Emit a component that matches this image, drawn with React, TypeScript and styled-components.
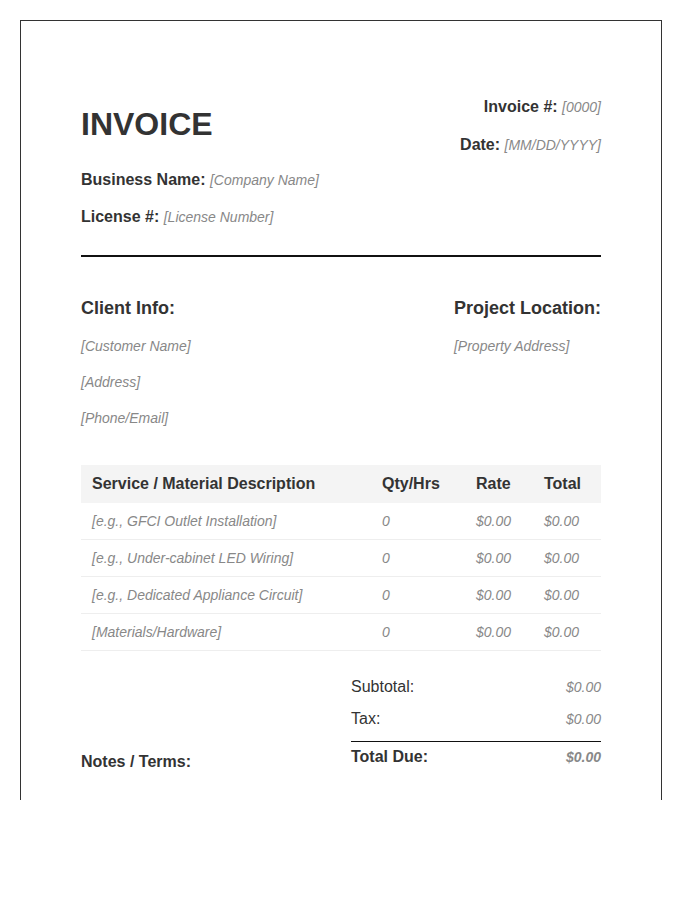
import styled, { createGlobalStyle } from 'styled-components'

const Global = createGlobalStyle`
  body {
    margin: 0;
    background: #fff;
    font-family: 'Liberation Sans', Arial, sans-serif;
    color: #333;
  }
`

const Page = styled.div`
  margin: 20px 0 0 20px;
  width: 642px;
  height: 780px;
  box-sizing: border-box;
  border: 1px solid #333;
  border-bottom: none;
  padding: 76px 60px 0;
  overflow: hidden;
`

const Header = styled.div`
  display: flex;
  justify-content: space-between;
`

const Title = styled.h1`
  margin: 8px 0 0;
  font-size: 32px;
  line-height: 38px;
  font-weight: bold;
`

const Line = styled.p<{ $gap?: number }>`
  margin: ${(p) => p.$gap ?? 0}px 0 0;
  font-size: 16px;
  line-height: 20px;
  font-weight: bold;
`

const RightCol = styled.div`
  text-align: right;
`

const Ph = styled.span`
  font-size: 14px;
  font-weight: normal;
  font-style: italic;
  color: #888;
`

const Rule = styled.hr`
  margin: 28px 0 0;
  border: none;
  border-top: 2px solid #111;
`

const InfoRow = styled.div`
  display: flex;
  justify-content: space-between;
  margin-top: 39px;
`

const Heading = styled.h2`
  margin: 0 0 10px;
  font-size: 18px;
  line-height: 24px;
  font-weight: bold;
`

const InfoItem = styled.div`
  margin-top: 16px;
  font-size: 14px;
  line-height: 20px;
  font-style: italic;
  color: #888;
`

const Table = styled.table`
  margin-top: 37px;
  width: 520px;
  border-collapse: collapse;
  table-layout: fixed;
`

const Th = styled.th<{ $w: number }>`
  width: ${(p) => p.$w}px;
  height: 38px;
  padding: 0 11px;
  background: #f4f4f4;
  text-align: left;
  font-size: 16px;
  font-weight: bold;
`

const Td = styled.td`
  height: 36px;
  padding: 0 11px;
  border-bottom: 1px solid #eee;
  font-size: 14px;
  font-style: italic;
  color: #888;
  white-space: nowrap;
`

const Bottom = styled.div`
  display: flex;
  justify-content: space-between;
  align-items: flex-end;
  margin-top: 26px;
`

const Notes = styled.div`
  font-size: 16px;
  font-weight: bold;
  line-height: 20px;
  margin-bottom: -5px;
`

const Totals = styled.div`
  width: 250px;
`

const TotalRow = styled.div<{ $bold?: boolean; $gap?: number }>`
  display: flex;
  justify-content: space-between;
  margin-top: ${(p) => p.$gap ?? 0}px;
  font-size: 16px;
  line-height: 20px;
  font-weight: ${(p) => (p.$bold ? 'bold' : 'normal')};
`

const Amount = styled.span<{ $bold?: boolean }>`
  font-size: 14px;
  font-style: italic;
  color: #888;
  font-weight: ${(p) => (p.$bold ? 'bold' : 'normal')};
`

const TotalRule = styled.div`
  margin-top: 12px;
  border-top: 1px solid #111;
  padding-top: 5px;
`

const rows = [
  '[e.g., GFCI Outlet Installation]',
  '[e.g., Under-cabinet LED Wiring]',
  '[e.g., Dedicated Appliance Circuit]',
  '[Materials/Hardware]',
]

export default function App() {
  return (
    <>
      <Global />
      <Page>
        <Header>
          <div>
            <Title>INVOICE</Title>
            <Line $gap={27}>
              Business Name: <Ph>[Company Name]</Ph>
            </Line>
            <Line $gap={17}>
              License #: <Ph>[License Number]</Ph>
            </Line>
          </div>
          <RightCol>
            <Line>
              Invoice #: <Ph>[0000]</Ph>
            </Line>
            <Line $gap={18}>
              Date: <Ph>[MM/DD/YYYY]</Ph>
            </Line>
          </RightCol>
        </Header>
        <Rule />
        <InfoRow>
          <div>
            <Heading>Client Info:</Heading>
            <InfoItem>[Customer Name]</InfoItem>
            <InfoItem>[Address]</InfoItem>
            <InfoItem>[Phone/Email]</InfoItem>
          </div>
          <div>
            <Heading>Project Location:</Heading>
            <InfoItem>[Property Address]</InfoItem>
          </div>
        </InfoRow>
        <Table>
          <thead>
            <tr>
              <Th $w={268}>Service / Material Description</Th>
              <Th $w={72}>Qty/Hrs</Th>
              <Th $w={46}>Rate</Th>
              <Th $w={46}>Total</Th>
            </tr>
          </thead>
          <tbody>
            {rows.map((r) => (
              <tr key={r}>
                <Td>{r}</Td>
                <Td>0</Td>
                <Td>$0.00</Td>
                <Td>$0.00</Td>
              </tr>
            ))}
          </tbody>
        </Table>
        <Bottom>
          <Notes>Notes / Terms:</Notes>
          <Totals>
            <TotalRow>
              Subtotal: <Amount>$0.00</Amount>
            </TotalRow>
            <TotalRow $gap={12}>
              Tax: <Amount>$0.00</Amount>
            </TotalRow>
            <TotalRule>
              <TotalRow $bold>
                Total Due: <Amount $bold>$0.00</Amount>
              </TotalRow>
            </TotalRule>
          </Totals>
        </Bottom>
      </Page>
    </>
  )
}
